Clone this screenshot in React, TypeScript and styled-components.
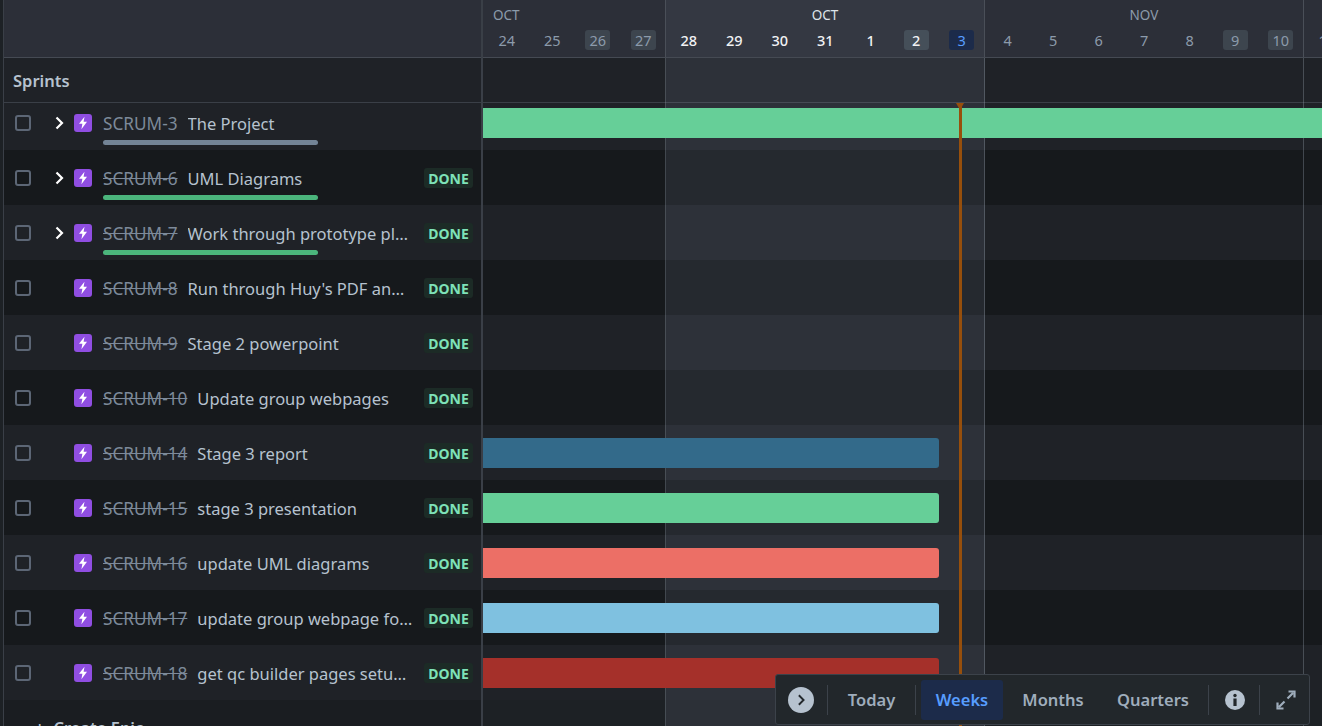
import styled, { createGlobalStyle } from "styled-components";

const GlobalStyle = createGlobalStyle`
  html, body {
    margin: 0;
    height: 100%;
    overflow: hidden;
    background: #1d2125;
  }
  * {
    box-sizing: border-box;
  }
  #root {
    height: 100%;
  }
`;

const Page = styled.div`
  position: relative;
  display: flex;
  width: 1322px;
  height: 726px;
  overflow: hidden;
  padding-left: 3px;
  background: #1d2125;
  color: #b6c2cf;
  font-family: "Noto Sans", "Open Sans", sans-serif;
  font-size: 16.5px;
`;

/* left column */
const ListPane = styled.div`
  flex: 0 0 480px;
  min-width: 0;
  display: flex;
  flex-direction: column;
  border-left: 1px solid #3a3f47;
  border-right: 2px solid #3a3f47;
`;

const ListHeader = styled.div`
  flex: 0 0 58px;
  background: #2c2f38;
  border-bottom: 1px solid #454a53;
`;

const SprintsRow = styled.div`
  flex: 0 0 45px;
  display: flex;
  align-items: center;
  padding: 0 0 0 9px;
  background: #1f2227;
  border-bottom: 1px solid #3a3f47;
  font-weight: 600;
  font-size: 16.5px;
`;

const Row = styled.div<{ $dark: boolean; $first: boolean }>`
  flex: 0 0 ${(p) => (p.$first ? "47px" : "55px")};
  display: flex;
  flex-direction: column;
  padding-top: ${(p) => (p.$first ? "9px" : "17px")};
  background: ${(p) => (p.$dark ? "#16191c" : "#1f2227")};
`;

const RowLine = styled.div`
  display: flex;
  align-items: center;
  height: 22px;
  min-width: 0;
  padding: 0 8px 0 11px;
`;

const Checkbox = styled.span`
  flex: 0 0 16px;
  height: 16px;
  border: 2px solid #5c6675;
  border-radius: 3px;
`;

const Chevron = styled.span`
  flex: 0 0 43px;
  display: flex;
  justify-content: flex-end;
  padding-right: 8px;
  color: #ffffff;
`;

const TypeIcon = styled.span`
  flex: 0 0 18px;
  height: 18px;
  display: flex;
  align-items: center;
  justify-content: center;
  border-radius: 3px;
  background: #904ee2;
`;

const IssueKey = styled.span<{ $done: boolean }>`
  flex: none;
  margin-left: 11px;
  padding-top: 1px;
  color: #7d8a9a;
  font-size: 17.2px;
  text-decoration: ${(p) => (p.$done ? "line-through" : "none")};
`;

const IssueTitle = styled.span`
  flex: 1;
  min-width: 0;
  margin-left: 10px;
  padding-top: 1px;
  white-space: nowrap;
  overflow: hidden;
  text-overflow: ellipsis;
`;

const DoneBadge = styled.span`
  flex: none;
  width: 49px;
  height: 20px;
  margin-left: 10px;
  display: flex;
  align-items: center;
  justify-content: center;
  border-radius: 3px;
  background: #1c2b26;
  color: #7ee2b8;
  font-size: 14px;
  font-weight: 700;
`;

const Progress = styled.div<{ $color: string }>`
  width: 215px;
  height: 5px;
  margin: 6px 0 0 99px;
  border-radius: 3px;
  background: ${(p) => p.$color};
`;

const CreateEpic = styled.div`
  flex: none;
  display: flex;
  align-items: center;
  gap: 9px;
  height: 50px;
  padding: 5px 0 0 31px;
  font-weight: 600;
  font-size: 16.5px;
  background: #1a1d21;
`;

/* timeline */
const Timeline = styled.div`
  position: relative;
  flex: 1;
  min-width: 0;
  display: flex;
  flex-direction: column;
`;

const DateHeader = styled.div`
  flex: 0 0 58px;
  display: flex;
  background: #2c2f38;
  border-bottom: 1px solid #454a53;
`;

const DateSection = styled.div<{ $current?: boolean; $width: number; $pad?: number }>`
  flex: 0 0 ${(p) => p.$width}px;
  min-width: 0;
  padding-left: ${(p) => p.$pad ?? 0}px;
  border-right: 1px solid #4a4f58;
  background: ${(p) => (p.$current ? "#343842" : "transparent")};
`;

const MonthLabel = styled.div<{ $left?: boolean; $current?: boolean }>`
  height: 30px;
  padding: 5px 0 0 ${(p) => (p.$left ? "9px" : "0")};
  text-align: ${(p) => (p.$left ? "left" : "center")};
  color: ${(p) => (p.$current ? "#dee4ea" : "#8c9bab")};
  font-size: 13.5px;
  line-height: 20px;
`;

const DayRow = styled.div`
  display: flex;
`;

const DayCell = styled.div`
  flex: 0 0 45.5px;
  display: flex;
  justify-content: center;
`;

const DayPill = styled.span<{ $current?: boolean; $weekend?: boolean; $today?: boolean }>`
  min-width: 25px;
  height: 20px;
  padding: 0 2px;
  display: flex;
  align-items: center;
  justify-content: center;
  border-radius: 3px;
  font-size: 14.5px;
  font-weight: ${(p) => (p.$current && !p.$today ? 500 : 400)};
  color: ${(p) => (p.$today ? "#579dff" : p.$current ? "#f1f2f4" : "#8c9bab")};
  background: ${(p) =>
    p.$today ? "#1c2b4a" : p.$weekend ? (p.$current ? "#454f59" : "#3d454e") : "transparent"};
`;

const SprintBand = styled.div`
  flex: 0 0 45px;
  background: #1f2227;
  border-bottom: 1px solid #3a3f47;
`;

const Track = styled.div<{ $dark: boolean; $first: boolean }>`
  flex: 0 0 ${(p) => (p.$first ? "47px" : "55px")};
  display: flex;
  align-items: ${(p) => (p.$first ? "flex-start" : "center")};
  padding-top: ${(p) => (p.$first ? "5px" : "0")};
  background: ${(p) => (p.$dark ? "#16191c" : "#1f2227")};
`;

const GanttBar = styled.div<{ $color: string; $open?: boolean }>`
  position: relative;
  z-index: 2;
  flex: 0 0 ${(p) => (p.$open ? "900px" : "456px")};
  height: 30px;
  border-radius: 0 3px 3px 0;
  background: ${(p) => p.$color};
`;

const GridLines = styled.div`
  position: absolute;
  inset: 58px 0 0 0;
  z-index: 1;
  display: flex;
  pointer-events: none;
`;

const GridColumn = styled.div<{ $current?: boolean; $width: number }>`
  flex: 0 0 ${(p) => p.$width}px;
  border-right: 1px solid rgba(160, 170, 185, 0.32);
  background: ${(p) => (p.$current ? "rgba(174, 185, 215, 0.1)" : "transparent")};
`;

const TodayLine = styled.div`
  position: absolute;
  z-index: 3;
  top: 103px;
  bottom: 0;
  left: 476px;
  width: 3px;
  background: #974f0c;

  &::before {
    content: "";
    position: absolute;
    top: 0;
    left: -3px;
    border-left: 4.5px solid transparent;
    border-right: 4.5px solid transparent;
    border-top: 7px solid #974f0c;
  }
`;

/* floating controls */
const Toolbar = styled.div`
  position: absolute;
  z-index: 5;
  left: 775px;
  top: 674px;
  width: 535px;
  height: 51px;
  display: flex;
  align-items: center;
  padding: 0 0 0 12px;
  background: #22272b;
  border: 1px solid #3c424a;
  border-radius: 3px;
  color: #9fadbc;
  font-weight: 600;
`;

const RoundButton = styled.span`
  flex: 0 0 26px;
  height: 26px;
  display: flex;
  align-items: center;
  justify-content: center;
  border-radius: 50%;
  background: #b6c2cf;
  color: #22272b;
`;

const Divider = styled.span<{ $gap: number }>`
  flex: 0 0 1px;
  height: 30px;
  margin-left: ${(p) => p.$gap}px;
  background: #3c424a;
`;

const ToolButton = styled.span<{ $active?: boolean; $width: number; $ml?: number }>`
  flex: 0 0 ${(p) => p.$width}px;
  height: 40px;
  margin-left: ${(p) => p.$ml ?? 0}px;
  display: flex;
  align-items: center;
  justify-content: center;
  border-radius: 3px;
  font-size: 16.5px;
  color: ${(p) => (p.$active ? "#579dff" : "#9fadbc")};
  background: ${(p) => (p.$active ? "#1c2b4a" : "transparent")};
`;

const IconSlot = styled.span<{ $ml: number }>`
  flex: none;
  display: flex;
  margin-left: ${(p) => p.$ml}px;
`;

type Issue = {
  key: string;
  title: string;
  done: boolean;
  expand?: boolean;
  progress?: string;
  bar?: string;
};

const issues: Issue[] = [
  { key: "SCRUM-3", title: "The Project", done: false, expand: true, progress: "#738496", bar: "#66cf98" },
  { key: "SCRUM-6", title: "UML Diagrams", done: true, expand: true, progress: "#4bb57c" },
  { key: "SCRUM-7", title: "Work through prototype plan", done: true, expand: true, progress: "#4bb57c" },
  { key: "SCRUM-8", title: "Run through Huy's PDF and add tasks", done: true },
  { key: "SCRUM-9", title: "Stage 2 powerpoint", done: true },
  { key: "SCRUM-10", title: "Update group webpages", done: true },
  { key: "SCRUM-14", title: "Stage 3 report", done: true, bar: "#336a8a" },
  { key: "SCRUM-15", title: "stage 3 presentation", done: true, bar: "#66cf98" },
  { key: "SCRUM-16", title: "update UML diagrams", done: true, bar: "#ec6f66" },
  { key: "SCRUM-17", title: "update group webpage for stage 3", done: true, bar: "#7fc1e0" },
  { key: "SCRUM-18", title: "get qc builder pages setup now", done: true, bar: "#a5302a" },
];

const months = [
  { label: "OCT", width: 183, pad: 1, left: true, days: [24, 25, 26, 27], weekend: [26, 27] },
  { label: "OCT", width: 319, current: true, days: [28, 29, 30, 31, 1, 2, 3], weekend: [2], today: 3 },
  { label: "NOV", width: 319, days: [4, 5, 6, 7, 8, 9, 10], weekend: [9, 10] },
  { label: "", width: 60, days: [11], weekend: [] },
];

function Bolt() {
  return (
    <svg width="12" height="14" viewBox="0 0 12 14" fill="#fff">
      <path d="M7.500 .8 2 7.800H5.400L4.400 13.200 10 5.800H6.600Z" />
    </svg>
  );
}

function ChevronRight({ size = 14 }: { size?: number }) {
  return (
    <svg width={size} height={size} viewBox="0 0 14 14" fill="none" stroke="currentColor" strokeWidth="2.2">
      <path d="M4.500 1.500 10 7l-5.500 5.500" />
    </svg>
  );
}

export default function App() {
  return (
    <Page>
      <GlobalStyle />
      <ListPane>
        <ListHeader />
        <SprintsRow>Sprints</SprintsRow>
        {issues.map((issue, i) => (
          <Row key={issue.key} $dark={i % 2 === 1} $first={i === 0}>
            <RowLine>
              <Checkbox />
              <Chevron>{issue.expand && <ChevronRight />}</Chevron>
              <TypeIcon>
                <Bolt />
              </TypeIcon>
              <IssueKey $done={issue.done}>{issue.key}</IssueKey>
              <IssueTitle>{issue.title}</IssueTitle>
              {issue.done && <DoneBadge>DONE</DoneBadge>}
            </RowLine>
            {issue.progress && <Progress $color={issue.progress} />}
          </Row>
        ))}
        <CreateEpic>
          <span>+</span>
          <span>Create Epic</span>
        </CreateEpic>
      </ListPane>

      <Timeline>
        <DateHeader>
          {months.map((m, i) => (
            <DateSection key={i} $width={m.width} $pad={m.pad} $current={m.current}>
              <MonthLabel $left={m.left} $current={m.current}>
                {m.label}
              </MonthLabel>
              <DayRow>
                {m.days.map((d) => (
                  <DayCell key={d}>
                    <DayPill $current={m.current} $weekend={m.weekend.includes(d)} $today={m.today === d}>
                      {d}
                    </DayPill>
                  </DayCell>
                ))}
              </DayRow>
            </DateSection>
          ))}
        </DateHeader>
        <SprintBand />
        {issues.map((issue, i) => (
          <Track key={issue.key} $dark={i % 2 === 1} $first={i === 0}>
            {issue.bar && <GanttBar $color={issue.bar} $open={i === 0} />}
          </Track>
        ))}
        <GridLines>
          <GridColumn $width={183} />
          <GridColumn $width={319} $current />
          <GridColumn $width={319} />
        </GridLines>
        <TodayLine />
      </Timeline>

      <Toolbar>
        <RoundButton>
          <ChevronRight size={12} />
        </RoundButton>
        <Divider $gap={13} />
        <ToolButton $width={87}>Today</ToolButton>
        <Divider $gap={0} />
        <ToolButton $active $width={82} $ml={5}>
          Weeks
        </ToolButton>
        <ToolButton $width={100}>Months</ToolButton>
        <ToolButton $width={100}>Quarters</ToolButton>
        <Divider $gap={5} />
        <IconSlot $ml={16}>
          <svg width="20" height="20" viewBox="0 0 20 20">
            <circle cx="10" cy="10" r="10" fill="#b6c2cf" />
            <circle cx="10" cy="5.500" r="1.700" fill="#22272b" />
            <rect x="8.400" y="8.500" width="3.200" height="7.500" fill="#22272b" />
          </svg>
        </IconSlot>
        <Divider $gap={14} />
        <IconSlot $ml={16}>
          <svg width="20" height="20" viewBox="0 0 20 20" fill="none" stroke="#9fadbc" strokeWidth="2.200">
            <path d="M11.500 8.500 17 3M12.500 1.500h6v6M8.500 11.500 3 17M1.500 12.500v6h6" />
          </svg>
        </IconSlot>
      </Toolbar>
    </Page>
  );
}
